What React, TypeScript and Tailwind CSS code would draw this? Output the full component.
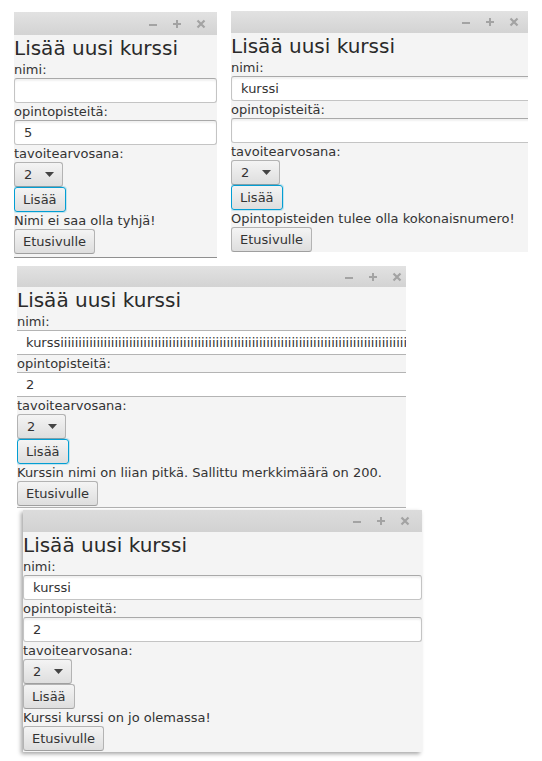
import React from "react";

type FieldVariant = "full" | "wide" | "bare";

function TitleIcons({ pr }: { pr: string }) {
  return (
    <div className={`flex h-full items-center justify-end gap-[14px] ${pr}`}>
      <svg width="10" height="10" viewBox="0 0 10 10">
        <rect x="1" y="5" width="8" height="2" fill="#a3a3a3" />
      </svg>
      <svg width="10" height="10" viewBox="0 0 10 10">
        <rect x="1" y="4" width="8" height="2" fill="#a3a3a3" />
        <rect x="4" y="1" width="2" height="8" fill="#a3a3a3" />
      </svg>
      <svg width="10" height="10" viewBox="0 0 10 10">
        <path d="M1.5 1.5 L8.5 8.5 M8.5 1.5 L1.5 8.5" stroke="#a3a3a3" strokeWidth="2.2" />
      </svg>
    </div>
  );
}

function Field({ value, variant }: { value: string; variant: FieldVariant }) {
  if (variant === "bare") {
    return (
      <div className="h-[25px] w-full shrink-0 bg-white border-y border-[#b4b4b4] flex items-center pl-[9px] overflow-hidden whitespace-nowrap text-[#333]">
        {value}
      </div>
    );
  }
  return (
    <div
      className={`h-[25px] shrink-0 bg-white border border-[#c4c4c4] border-t-[#a9a9a9] rounded-[3px] flex items-center pl-[9px] overflow-hidden whitespace-nowrap text-[#333] shadow-[inset_0_2px_2px_rgba(0,0,0,0.06)] ${
        variant === "wide" ? "w-[calc(100%+14px)]" : "w-full"
      }`}
    >
      {value}
    </div>
  );
}

function Btn({ children, focused }: { children: React.ReactNode; focused?: boolean }) {
  return (
    <div
      className={`h-[25px] shrink-0 self-start flex items-center px-[8px] rounded-[3px] bg-gradient-to-b from-[#f4f4f4] to-[#dedede] text-[#333] border ${
        focused
          ? "border-[#039ed3] shadow-[0_0_0_1px_rgba(3,158,211,0.2)]"
          : "border-[#b3b3b3] border-b-[#9f9f9f]"
      }`}
    >
      {children}
    </div>
  );
}

function Combo() {
  return (
    <div className="h-[25px] w-[49px] shrink-0 flex items-center pl-[9px] rounded-[3px] bg-gradient-to-b from-[#f4f4f4] to-[#dedede] border border-[#b3b3b3] border-b-[#9f9f9f] text-[#333]">
      <span>2</span>
      <svg className="ml-[13px]" width="9" height="5" viewBox="0 0 9 5">
        <path d="M0 0 L9 0 L4.5 5 Z" fill="#444" />
      </svg>
    </div>
  );
}

function Form({
  name,
  points,
  error,
  variant,
  focused,
}: {
  name: string;
  points: string;
  error: string;
  variant: FieldVariant;
  focused: boolean;
}) {
  return (
    <div className="flex flex-col text-[13px] leading-[17px] text-[#333]">
      <div className="h-[26px] text-[20px] leading-[26px] whitespace-nowrap text-[#2a2a2a]">Lisää uusi kurssi</div>
      <div className="h-[17px] whitespace-nowrap">nimi:</div>
      <Field value={name} variant={variant} />
      <div className="h-[17px] whitespace-nowrap">opintopisteitä:</div>
      <Field value={points} variant={variant} />
      <div className="h-[17px] whitespace-nowrap">tavoitearvosana:</div>
      <Combo />
      <Btn focused={focused}>Lisää</Btn>
      <div className="h-[17px] whitespace-nowrap">{error}</div>
      <Btn>Etusivulle</Btn>
    </div>
  );
}

export default function App() {
  const longName = "kurssi" + "i".repeat(160);
  return (
    <div className="relative w-[542px] h-[761px] bg-white overflow-hidden font-['DejaVu_Sans',sans-serif]">
      {/* Window 1 */}
      <div className="absolute left-[14px] top-[12px] w-[203px] h-[246px] bg-[#f4f4f4] overflow-hidden border-b border-[#8f8f8f]">
        <div className="h-[23px] bg-gradient-to-b from-[#e2e2e2] to-[#d3d3d3]">
          <TitleIcons pr="pr-[11px]" />
        </div>
        <Form name="" points="5" error="Nimi ei saa olla tyhjä!" variant="full" focused />
      </div>

      {/* Window 2 */}
      <div className="absolute left-[231px] top-[11px] w-[297px] h-[241px] bg-[#f4f4f4] overflow-hidden">
        <div className="h-[22px] bg-gradient-to-b from-[#e2e2e2] to-[#d3d3d3]">
          <TitleIcons pr="pr-[9px]" />
        </div>
        <Form name="kurssi" points="" error="Opintopisteiden tulee olla kokonaisnumero!" variant="wide" focused />
      </div>

      {/* Window 3 */}
      <div className="absolute left-[17px] top-[266px] w-[389px] h-[242px] bg-[#f4f4f4] overflow-hidden border-b border-[#b0b0b0]">
        <div className="h-[21px] bg-gradient-to-b from-[#e2e2e2] to-[#d3d3d3]">
          <TitleIcons pr="pr-[4px]" />
        </div>
        <Form
          name={longName}
          points="2"
          error="Kurssin nimi on liian pitkä. Sallittu merkkimäärä on 200."
          variant="bare"
          focused
        />
      </div>

      {/* Window 4 */}
      <div className="absolute left-[23px] top-[510px] w-[399px] h-[242px] bg-[#f4f4f4] overflow-hidden shadow-[-2px_2px_4px_rgba(0,0,0,0.35)]">
        <div className="h-[22px] bg-gradient-to-b from-[#dcdcdc] to-[#d2d2d2]">
          <TitleIcons pr="pr-[12px]" />
        </div>
        <Form name="kurssi" points="2" error="Kurssi kurssi on jo olemassa!" variant="full" focused={false} />
      </div>
    </div>
  );
}
